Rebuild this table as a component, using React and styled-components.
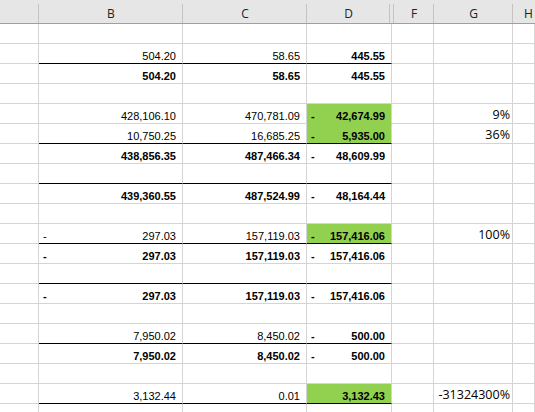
import React from "react";
import styled, { createGlobalStyle } from "styled-components";

const GlobalStyle = createGlobalStyle`
  html, body {
    margin: 0;
    padding: 0;
    background: #ffffff;
    overflow: hidden;
  }
`;

const Sheet = styled.div`
  width: 535px;
  height: 412px;
  overflow: hidden;
  background: #fff;
`;

const HeaderRow = styled.div`
  display: grid;
  grid-template-columns: 39px 144px 124px 83px 4px 40px 79px 1fr;
  height: 23px;
  background: #e6e6e6;
  border-bottom: 1px solid #9f9f9f;
`;

const HeaderCell = styled.div`
  display: flex;
  align-items: center;
  justify-content: center;
  padding-top: 3px;
  box-sizing: border-box;
  font-family: "Open Sans", "Noto Sans", sans-serif;
  font-size: 12px;
  color: #222;
  background: ${(p) =>
    p.$last
      ? "none"
      : "linear-gradient(#c3c3c3, #c3c3c3) right 4px / 1px calc(100% - 4px) no-repeat"};
  overflow: hidden;
  white-space: nowrap;
  justify-content: ${(p) => (p.$edge ? "flex-start" : "center")};
  padding-left: ${(p) => (p.$edge ? "11px" : "0")};
`;

const Grid = styled.div`
  display: grid;
  grid-template-columns: 39px 144px 124px 85px 42px 79px 1fr;
  grid-auto-rows: 20px;
`;

const Cell = styled.div`
  box-sizing: border-box;
  display: flex;
  align-items: flex-end;
  justify-content: ${(p) => (p.$dash ? "space-between" : "flex-end")};
  padding: 0 6px 1px 4px;
  border-right: 1px solid #d4d4d4;
  border-bottom: 1px solid
    ${(p) => (p.$line ? "#000" : p.$green ? "#92d050" : "#d4d4d4")};
  background: ${(p) => (p.$green ? "#92d050" : "#fff")};
  font-family: "Liberation Sans", Arial, sans-serif;
  font-size: 11px;
  font-weight: ${(p) => (p.$bold ? 700 : 400)};
  color: #000;
  white-space: nowrap;
  overflow: hidden;
`;

const PercentCell = styled(Cell)`
  padding: 0 2px 0 0;
  font-family: "Open Sans", "Noto Sans", sans-serif;
  font-size: 12.5px;
  font-weight: 400;
`;

const headers = ["", "B", "C", "D", "", "F", "G", "H"];

// [B, C, D, G, underline]
// a cell: [text, bold, dash, green]
const rows = [
  [null, null, null, null, false],
  [["504.20"], ["58.65"], ["445.55", true], null, true],
  [["504.20", true], ["58.65", true], ["445.55", true], null, false],
  [null, null, null, null, false],
  [["428,106.10"], ["470,781.09"], ["42,674.99", true, true, true], "9%", false],
  [["10,750.25"], ["16,685.25"], ["5,935.00", true, true, true], "36%", true],
  [["438,856.35", true], ["487,466.34", true], ["48,609.99", true, true], null, false],
  [null, null, null, null, true],
  [["439,360.55", true], ["487,524.99", true], ["48,164.44", true, true], null, false],
  [null, null, null, null, false],
  [["297.03", false, true], ["157,119.03"], ["157,416.06", true, true, true], "100%", true],
  [["297.03", true, true], ["157,119.03", true], ["157,416.06", true, true], null, false],
  [null, null, null, null, true],
  [["297.03", true, true], ["157,119.03", true], ["157,416.06", true, true], null, false],
  [null, null, null, null, false],
  [["7,950.02"], ["8,450.02"], ["500.00", true, true], null, true],
  [["7,950.02", true], ["8,450.02", true], ["500.00", true, true], null, false],
  [null, null, null, null, false],
  [["3,132.44"], ["0.01"], ["3,132.43", true, false, true], "-31324300%", true],
  [["3,132.44", true], ["0.01", true], ["3,132.43", true], null, false],
  [null, null, null, null, false],
];

const ValueCell = ({ cell, line }) => {
  if (!cell) return <Cell $line={line} />;
  const [text, bold, dash, green] = cell;
  return (
    <Cell $line={line} $bold={bold} $dash={dash} $green={green}>
      {dash && <span>-</span>}
      <span>{text}</span>
    </Cell>
  );
};

const App = () => {
  return (
    <>
      <GlobalStyle />
      <Sheet>
        <HeaderRow>
          {headers.map((h, i) => (
            <HeaderCell key={i} $last={i === headers.length - 1} $edge={i === headers.length - 1}>
              {h}
            </HeaderCell>
          ))}
        </HeaderRow>
        <Grid>
          {rows.map(([b, c, d, g, line], i) => (
            <React.Fragment key={i}>
              <Cell />
              <ValueCell cell={b} line={line} />
              <ValueCell cell={c} line={line} />
              <ValueCell cell={d} line={line} />
              <Cell />
              <PercentCell>{g}</PercentCell>
              <Cell />
            </React.Fragment>
          ))}
        </Grid>
      </Sheet>
    </>
  );
};

export default App;
